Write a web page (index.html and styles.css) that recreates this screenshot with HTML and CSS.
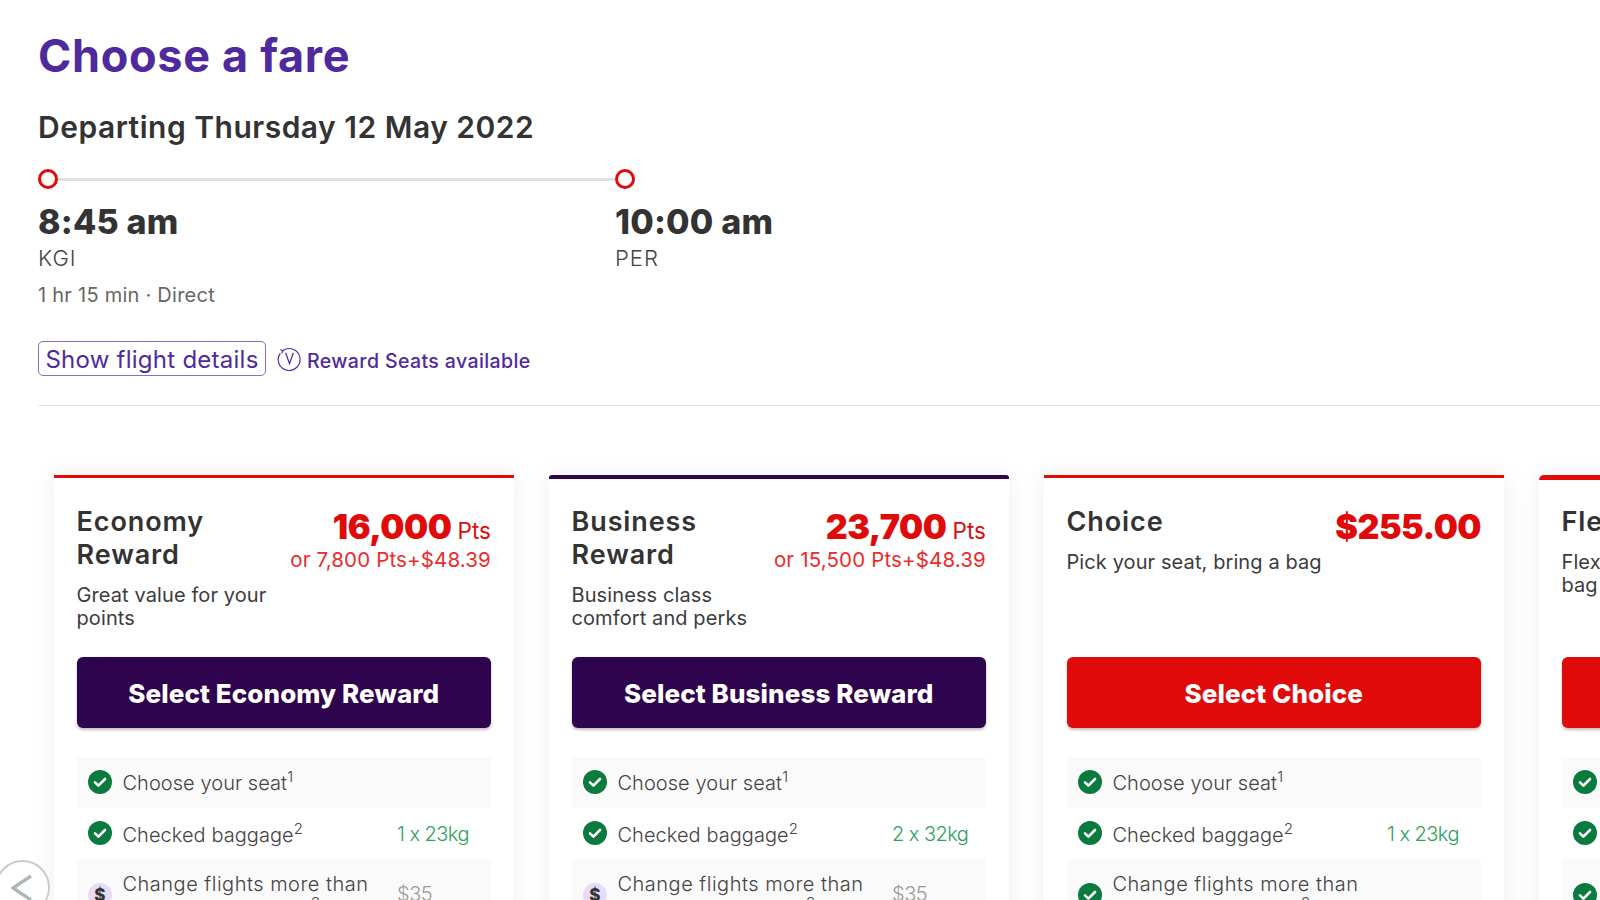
FILE: index.html
```html
<!DOCTYPE html>
<html lang="en">
<head>
<meta charset="utf-8">
<title>Choose a fare</title>
<link rel="stylesheet" href="styles.css">
</head>
<body>
<main class="page">
  <section class="summary">
    <h1 class="title">Choose a fare</h1>
    <h2 class="date">Departing Thursday 12 May 2022</h2>
    <div class="route">
      <div class="stop stop-from">
        <div class="track"><span class="dot"></span><span class="line"></span></div>
        <div class="time">8:45 am</div>
        <div class="port">KGI</div>
      </div>
      <div class="stop stop-to">
        <div class="track track-end"><span class="dot"></span></div>
        <div class="time">10:00 am</div>
        <div class="port">PER</div>
      </div>
    </div>
    <div class="duration">1 hr 15 min · Direct</div>
    <div class="actions">
      <button class="details">Show flight details</button>
      <svg class="v-icon" viewBox="0 0 24 24" width="25" height="25" fill="none" stroke="#4f2a9e" stroke-width="1.1">
        <path d="M5.5 4.5A10.5 10.5 0 1 1 3.2 6.8"/>
        <path d="M3.2 3.4 5.6 4.6 4.6 7"/>
        <path d="M8.3 6.5 12 17l3.7-10.5" stroke-width="1.2"/>
      </svg>
      <span class="reward">Reward Seats available</span>
    </div>
  </section>

  <section class="cards">
    <article class="card">
      <header class="head">
        <div class="head-text">
          <h3 class="name">Economy<br>Reward</h3>
          <p class="desc">Great value for your<br>points</p>
        </div>
        <div class="price">
          <div class="amount">16,000 <small>Pts</small></div>
          <div class="alt">or 7,800 Pts+$48.39</div>
        </div>
      </header>
      <button class="select select-dark">Select Economy Reward</button>
      <ul class="rows">
        <li class="row"><svg class="ico"><use href="#tick"/></svg><span class="label">Choose your seat<sup>1</sup></span></li>
        <li class="row"><svg class="ico"><use href="#tick"/></svg><span class="label">Checked baggage<sup>2</sup></span><span class="val val-green">1 x 23kg</span></li>
        <li class="row row-tall"><svg class="ico ico-low"><use href="#dollar"/></svg><span class="label">Change flights more than<br>1 hour before travel<sup>3</sup></span><span class="val val-grey">$35</span></li>
      </ul>
    </article>

    <article class="card card-dark">
      <header class="head">
        <div class="head-text">
          <h3 class="name">Business<br>Reward</h3>
          <p class="desc">Business class<br>comfort and perks</p>
        </div>
        <div class="price">
          <div class="amount">23,700 <small>Pts</small></div>
          <div class="alt">or 15,500 Pts+$48.39</div>
        </div>
      </header>
      <button class="select select-dark">Select Business Reward</button>
      <ul class="rows">
        <li class="row"><svg class="ico"><use href="#tick"/></svg><span class="label">Choose your seat<sup>1</sup></span></li>
        <li class="row"><svg class="ico"><use href="#tick"/></svg><span class="label">Checked baggage<sup>2</sup></span><span class="val val-green">2 x 32kg</span></li>
        <li class="row row-tall"><svg class="ico ico-low"><use href="#dollar"/></svg><span class="label">Change flights more than<br>1 hour before travel<sup>3</sup></span><span class="val val-grey">$35</span></li>
      </ul>
    </article>

    <article class="card">
      <header class="head">
        <div class="head-text">
          <h3 class="name">Choice</h3>
          <p class="desc desc-single">Pick your seat, bring a bag</p>
        </div>
        <div class="price">
          <div class="amount">$255.00</div>
        </div>
      </header>
      <button class="select select-red">Select Choice</button>
      <ul class="rows">
        <li class="row"><svg class="ico"><use href="#tick"/></svg><span class="label">Choose your seat<sup>1</sup></span></li>
        <li class="row"><svg class="ico"><use href="#tick"/></svg><span class="label">Checked baggage<sup>2</sup></span><span class="val val-green">1 x 23kg</span></li>
        <li class="row row-tall"><svg class="ico ico-low"><use href="#tick"/></svg><span class="label">Change flights more than<br>1 hour before travel<sup>3</sup></span></li>
      </ul>
    </article>

    <article class="card card-thick">
      <header class="head">
        <div class="head-text">
          <h3 class="name">Flexi</h3>
          <p class="desc desc-single">Flexibility to change,<br>bag included</p>
        </div>
      </header>
      <button class="select select-red">Select Flexi</button>
      <ul class="rows">
        <li class="row"><svg class="ico"><use href="#tick"/></svg><span class="label">Choose your seat<sup>1</sup></span></li>
        <li class="row"><svg class="ico"><use href="#tick"/></svg><span class="label">Checked baggage<sup>2</sup></span></li>
        <li class="row row-tall"><svg class="ico ico-low"><use href="#tick"/></svg><span class="label">Change flights more than<br>1 hour before travel<sup>3</sup></span></li>
      </ul>
    </article>
  </section>

  <button class="prev" aria-label="Previous">
    <svg viewBox="0 0 24 40" width="24" height="40" fill="none" stroke="#b0b8b6" stroke-width="3.4">
      <path d="M20 8 2 20l18 12"/>
    </svg>
  </button>
</main>

<svg class="defs" width="0" height="0">
  <symbol id="tick" viewBox="0 0 24 24">
    <circle cx="12" cy="12" r="12" fill="#0a7a3e"/>
    <path d="M7 12.4l3.4 3.2L17 9" fill="none" stroke="#fff" stroke-width="2.6" stroke-linecap="round" stroke-linejoin="round"/>
  </symbol>
  <symbol id="dollar" viewBox="0 0 24 24">
    <circle cx="12" cy="12" r="12" fill="#e6dcf8"/>
    <text x="12" y="18" text-anchor="middle" font-family="Inter, sans-serif" font-size="17" font-weight="800" fill="#333">$</text>
  </symbol>
</svg>
</body>
</html>
```

FILE: styles.css
```css
* { box-sizing: border-box; }
html, body { margin: 0; height: 900px; overflow: hidden; background: #fff; }
body { font-family: Inter, "Liberation Sans", sans-serif; color: #333; font-feature-settings: "calt" 0; }
.page { position: relative; height: 900px; overflow: hidden; }
.defs { display: block; }

.summary { margin-left: 38px; padding-top: 30px; height: 406px; border-bottom: 1px solid #e4e4e4; }
.title { margin: 0; font-size: 45px; line-height: 52px; font-weight: 700; color: #4f2a9e; letter-spacing: 0.7px; }
.date { margin: 27px 0 0; font-size: 30px; line-height: 36px; font-weight: 600; color: #333; letter-spacing: 0.5px; }

.route { display: flex; margin-top: 24px; }
.stop-from { width: 577px; }
.track { display: flex; align-items: center; height: 20px; }
.dot { flex: none; width: 20px; height: 20px; border: 3px solid #e10a0a; border-radius: 50%; background: #fff; }
.line { flex: 1; height: 3px; background: #dfe1e3; }
.stop-from .track { width: 577px; }
.time { margin-top: 13px; font-size: 34px; line-height: 40px; font-weight: 800; color: #333; letter-spacing: 0.2px; }
.port { margin-top: 1px; font-size: 22px; line-height: 30px; font-weight: 300; color: #444; letter-spacing: 1px; }
.duration { margin-top: 8px; font-size: 20px; line-height: 28px; font-weight: 400; color: #666; letter-spacing: 0.25px; }

.actions { display: flex; align-items: center; margin-top: 32px; }
.details { width: 228px; height: 35px; padding: 2px 0 0; border: 1px solid #8a6fc9; border-radius: 5px; background: #fff; font: 400 24px/1 Inter, sans-serif; color: #4f2a9e; letter-spacing: 0.25px; font-feature-settings: "calt" 0; }
.v-icon { margin-left: 11px; flex: none; }
.reward { margin: 5px 0 0 5px; font-size: 19.5px; font-weight: 500; color: #4f2a9e; letter-spacing: 0.4px; }

.cards { display: flex; gap: 34.5px; margin-left: 53.5px; padding-top: 69px; }
.card { flex: none; width: 460.5px; height: 500px; padding: 0 23px; background: #fff; border-top: 3px solid #e10a0a; box-shadow: 0 0 24px rgba(0,0,0,0.07); }
.card-dark { border-top: 4px solid #2f044f; border-radius: 3px 3px 0 0; }
.card-thick { border-top-width: 5px; border-radius: 5px 5px 0 0; }

.head { display: flex; justify-content: space-between; height: 179px; padding-top: 27px; }
.card-dark .head { height: 178px; padding-top: 26px; }
.card-thick .head { height: 177px; padding-top: 25px; }
.name { margin: 0; font-size: 27px; line-height: 33px; font-weight: 600; color: #333; letter-spacing: 0.9px; }
.desc { margin: 13px 0 0; font-size: 20px; line-height: 23px; font-weight: 400; color: #3c3c3c; letter-spacing: 0.1px; }
.price { text-align: right; color: #e10a0a; padding-top: 3px; }
.amount { font-size: 34px; line-height: 38px; font-weight: 900; color: #e10a0a; letter-spacing: -0.5px; }
.amount small { font-size: 22.5px; font-weight: 400; letter-spacing: 0; }
.alt { margin-top: -3px; font-size: 20.5px; line-height: 26px; font-weight: 400; color: #ee2a2a; letter-spacing: 0.15px; }

.select { display: block; width: 100%; height: 71px; border: 0; padding-top: 3px; border-radius: 6px; font: 800 26px/1 Inter, sans-serif; color: #fff; letter-spacing: 0.1px; box-shadow: 0 2px 3px rgba(0,0,0,0.25); font-feature-settings: "calt" 0; }
.select-dark { background: #2f044f; }
.select-red { background: #e10a0a; }

.rows { list-style: none; margin: 29px 0 0; padding: 0; }
.row { display: flex; align-items: center; min-height: 51px; padding: 0 0 0 11px; font-size: 20px; font-weight: 300; color: #444; letter-spacing: 0.05px; }
.row:nth-child(odd) { background: #fafafa; }
.row:nth-child(2) .label { padding-top: 3px; }
.row-tall { align-items: flex-start; padding-top: 13px; height: 80px; letter-spacing: 0.5px; }
.ico { flex: none; width: 24px; height: 24px; margin-right: 11px; margin-top: -2px; }
.ico-low { margin-top: 11px; }
.label { flex: 1; line-height: 24px; padding-top: 1px; }
.row-tall .label { line-height: 25px; padding-top: 0; }
.label sup { font-size: 15px; line-height: 0; letter-spacing: 0; }
.val { flex: none; width: 94px; letter-spacing: -0.55px; }
.val-green { color: #2f9e62; }
.val-grey { color: #999; margin-top: 10px; letter-spacing: -0.5px; }

.prev { position: absolute; left: -5px; top: 860px; width: 55px; height: 55px; padding: 0; border: 2px solid #c9cccb; border-radius: 50%; background: #fff; display: flex; align-items: center; justify-content: center; }
```
